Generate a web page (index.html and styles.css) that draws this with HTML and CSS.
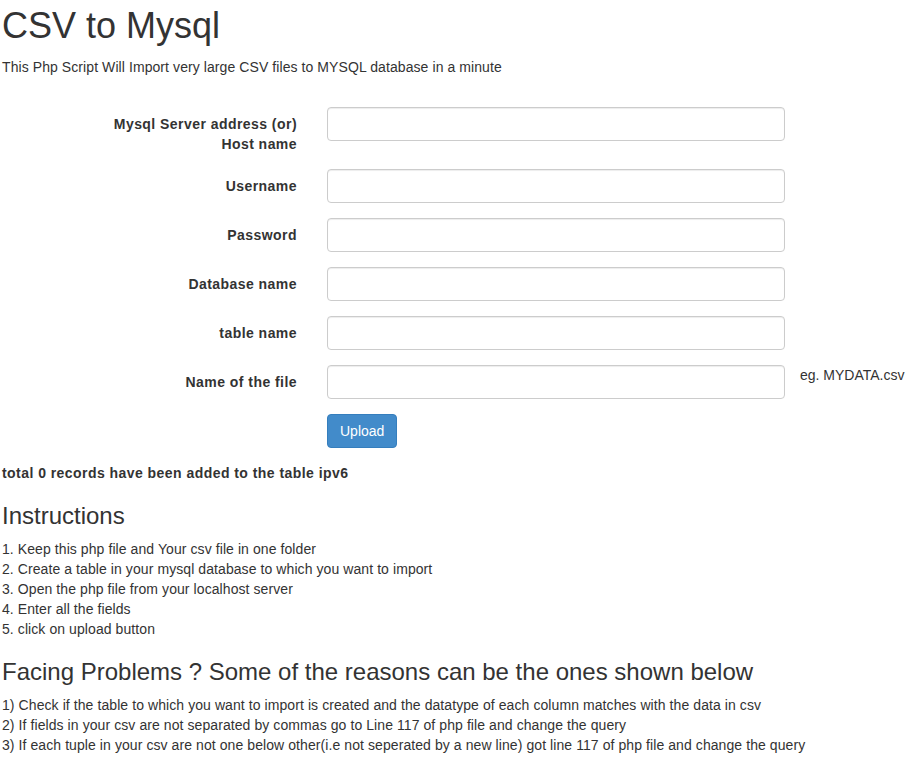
FILE: index.html
```html
<!DOCTYPE html>
<html>
<head>
<meta charset="utf-8">
<title>CSV to Mysql</title>
<link rel="stylesheet" href="styles.css">
</head>
<body>
<div class="page">
  <h1 class="title">CSV to Mysql</h1>
  <p class="lead-text">This Php Script Will Import very large CSV files to MYSQL database in a minute</p>

  <form class="form">
    <div class="form-group">
      <label class="form-label">Mysql Server address (or) Host name</label>
      <input class="form-input" type="text">
    </div>
    <div class="form-group">
      <label class="form-label">Username</label>
      <input class="form-input" type="text">
    </div>
    <div class="form-group">
      <label class="form-label">Password</label>
      <input class="form-input" type="text">
    </div>
    <div class="form-group">
      <label class="form-label">Database name</label>
      <input class="form-input" type="text">
    </div>
    <div class="form-group">
      <label class="form-label">table name</label>
      <input class="form-input" type="text">
    </div>
    <div class="form-group">
      <label class="form-label">Name of the file</label>
      <input class="form-input" type="text">
      <span class="form-hint">eg. MYDATA.csv</span>
    </div>
    <div class="form-group">
      <span class="form-label"></span>
      <button class="btn-primary" type="button">Upload</button>
    </div>
  </form>

  <div class="status">total 0 records have been added to the table ipv6</div>

  <h3 class="section-title">Instructions</h3>
  <p class="list">1. Keep this php file and Your csv file in one folder<br>
  2. Create a table in your mysql database to which you want to import<br>
  3. Open the php file from your localhost server<br>
  4. Enter all the fields<br>
  5. click on upload button</p>

  <h3 class="section-title">Facing Problems ? Some of the reasons can be the ones shown below</h3>
  <p class="list">1) Check if the table to which you want to import is created and the datatype of each column matches with the data in csv<br>
  2) If fields in your csv are not separated by commas go to Line 117 of php file and change the query<br>
  3) If each tuple in your csv are not one below other(i.e not seperated by a new line) got line 117 of php file and change the query</p>
</div>
</body>
</html>
```

FILE: styles.css
```css
* { box-sizing: border-box; }

html, body {
  margin: 0;
  padding: 0;
  background: #fff;
}

body {
  font-family: "Liberation Sans", Arial, Helvetica, sans-serif;
  font-size: 14px;
  line-height: 20px;
  color: #333;
  letter-spacing: 0.08px;
}

.page {
  padding: 0 2px;
}

.title {
  font-size: 36px;
  font-weight: 500;
  line-height: 1.1;
  letter-spacing: 0;
  margin: 6px 0 11px;
}

.lead-text {
  margin: 0 0 10px;
}

.form {
  padding-top: 20px;
}

.form-group {
  display: flex;
  align-items: flex-start;
  margin-bottom: 15px;
}

.form-label {
  flex: 0 0 295px;
  padding: 7px 0 0 90px;
  margin-right: 30px;
  text-align: right;
  font-weight: bold;
  letter-spacing: 0.45px;
}

.form-input {
  width: 458px;
  height: 34px;
  padding: 6px 12px;
  font: inherit;
  color: #555;
  background: #fff;
  border: 1px solid #ccc;
  border-radius: 4px;
  box-shadow: inset 0 1px 1px rgba(0, 0, 0, 0.075);
  margin: 0;
}

.form-hint {
  margin-left: 15px;
  letter-spacing: 0;
}

.btn-primary {
  height: 34px;
  padding: 6px 12px;
  font: inherit;
  letter-spacing: 0;
  color: #fff;
  background: #428bca;
  border: 1px solid #357ebd;
  border-radius: 4px;
  margin: 0;
  cursor: pointer;
}

.status {
  font-weight: bold;
  letter-spacing: 0.45px;
}

.section-title {
  font-size: 24px;
  font-weight: 500;
  line-height: 1.1;
  letter-spacing: 0;
  margin: 20px 0 10px;
}

.list {
  margin: 0 0 10px;
}
```
